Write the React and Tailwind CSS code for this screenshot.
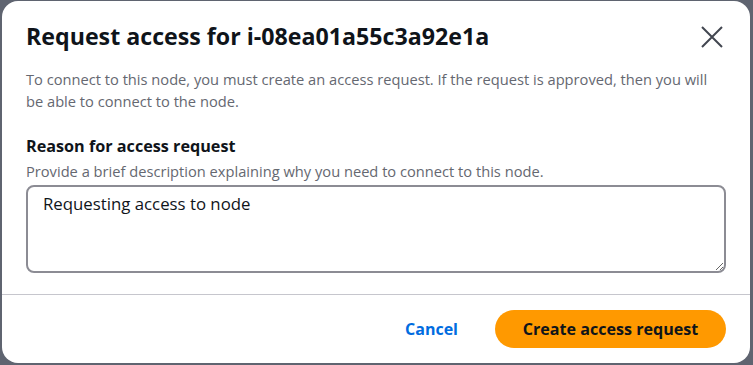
export default function App() {
  return (
    <div className="w-[753px] h-[365px] bg-[#5f6470] pl-[2px] pr-[3px] pt-[1px] pb-[2px] font-['Open_Sans',_'Noto_Sans',_sans-serif]">
      <div className="h-full w-full bg-white rounded-[16px] flex flex-col">
        <div className="flex items-start justify-between pl-[24px] pr-[26px] pt-[20px]">
          <h1 className="text-[23.2px] leading-[30px] font-bold text-[#0f141a]">Request access for i-08ea01a55c3a92e1a</h1>
          <button className="mt-[4px] w-[24px] h-[24px] flex items-center justify-center text-[#424650]">
            <svg width="24" height="24" viewBox="0 0 24 24" fill="none" stroke="currentColor" strokeWidth="2">
              <path d="M2 2 L22 22 M22 2 L2 22" />
            </svg>
          </button>
        </div>
        <div className="px-[24px] pt-[17px]">
          <p className="max-w-[690px] text-[14.67px] leading-[22px] text-[#656871]">
            To connect to this node, you must create an access request. If the request is approved, then you will be able to connect to the node.
          </p>
          <div className="mt-[24px]">
            <div className="text-[16.2px] leading-[20px] font-bold text-[#0f141a]">Reason for access request</div>
            <div className="mt-[5px] text-[14.67px] leading-[20px] text-[#656871]">Provide a brief description explaining why you need to connect to this node.</div>
            <textarea
              className="mt-[4px] block w-full h-[88px] border-2 border-[#8c8c94] rounded-[8px] px-[15px] pt-[5px] pb-[5px] text-[16.8px] leading-[24px] text-[#0f141a] outline-none resize-y font-['Open_Sans',_'Noto_Sans',_sans-serif]"
              defaultValue="Requesting access to node"
            />
          </div>
        </div>
        <div className="mt-[21px] border-t border-[#c6c6cd] flex items-center justify-end px-[24px] pt-[15px]">
          <button className="mr-[37px] text-[16px] leading-[22px] font-bold text-[#006ce0]">Cancel</button>
          <button className="h-[38px] w-[231px] rounded-full bg-[#ff9900] text-[16.1px] leading-[22px] font-bold text-[#0f141a]">Create access request</button>
        </div>
      </div>
    </div>
  );
}
